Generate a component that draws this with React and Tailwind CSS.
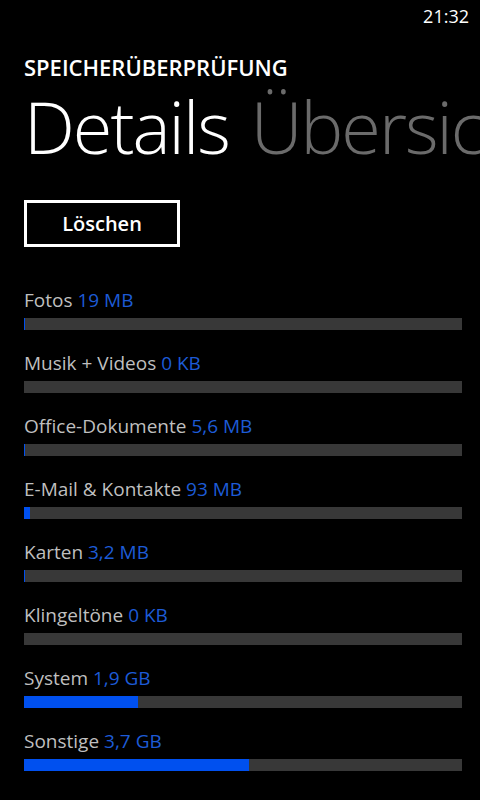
import React from 'react';

const items = [
  { name: 'Fotos', size: '19 MB', fill: 1 },
  { name: 'Musik + Videos', size: '0 KB', fill: 0 },
  { name: 'Office-Dokumente', size: '5,6 MB', fill: 1 },
  { name: 'E-Mail & Kontakte', size: '93 MB', fill: 6 },
  { name: 'Karten', size: '3,2 MB', fill: 1 },
  { name: 'Klingeltöne', size: '0 KB', fill: 0 },
  { name: 'System', size: '1,9 GB', fill: 114 },
  { name: 'Sonstige', size: '3,7 GB', fill: 225 },
];

const App = () => {
  return (
    <div className="w-[480px] h-[800px] bg-black text-white overflow-hidden font-['Open_Sans',sans-serif]">
      {/* Statusleiste */}
      <div className="h-[32px] flex justify-end items-center pr-[11px]">
        <span className="text-[18px] leading-none">21:32</span>
      </div>

      {/* Kopfzeile */}
      <div className="pl-[24px]">
        <h1 className="text-[22px] font-semibold leading-[26px] mt-[22px]">SPEICHERÜBERPRÜFUNG</h1>
        <div className="whitespace-nowrap text-[72px] font-light leading-[92px] tracking-[-2px]">
          <span>Details</span>
          <span className="ml-[22px] text-[#6b6b6b]">Übersicht</span>
        </div>
      </div>

      {/* Button */}
      <div className="pl-[24px] mt-[28px]">
        <button className="w-[156px] h-[47px] border-[3px] border-white text-[20px] font-semibold flex items-center justify-center">
          Löschen
        </button>
      </div>

      {/* Liste */}
      <div className="pl-[24px] mt-[43px] flex flex-col gap-[23px]">
        {items.map((it) => (
          <div key={it.name} className="flex flex-col gap-[7px]">
            <div className="text-[19px] leading-[21px] whitespace-nowrap">
              <span className="text-[#bfbfbf]">{it.name}</span>{' '}
              <span className="text-[#1d5bd6]">{it.size}</span>
            </div>
            <div className="h-[12px] w-[438px] bg-[#383838] flex">
              <div className="h-full bg-[#0050ef]" style={{ width: it.fill }} />
            </div>
          </div>
        ))}
      </div>
    </div>
  );
};

export default App;
